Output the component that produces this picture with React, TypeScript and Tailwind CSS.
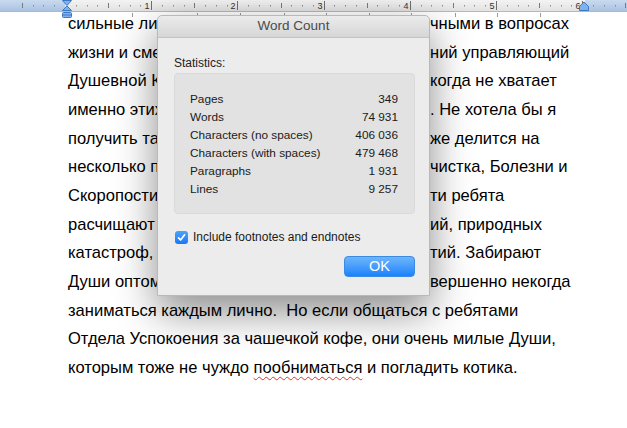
import React from "react";

const X0 = 65;
const INCH = 86.2;

function Ruler() {
  const ticks: React.ReactNode[] = [];
  for (let i = -4; i <= 56; i++) {
    const x = Math.round(X0 + (i * INCH) / 8) + 0.5;
    if (x < 0 || x > 627) continue;
    if (i % 8 === 0 && i > 0) {
      ticks.push(<line key={i} x1={x} x2={x} y1={1} y2={10} stroke="#6f6f6f" strokeWidth={1} />);
      ticks.push(
        <text key={"t" + i} x={x - 2} y={8.5} textAnchor="end" fontSize={9} fill="#333" fontFamily="'Liberation Sans', Arial, sans-serif">
          {i / 8}
        </text>
      );
    } else if (i % 4 === 0 && i !== 0) {
      ticks.push(<line key={i} x1={x} x2={x} y1={3} y2={8} stroke="#7a7a7a" strokeWidth={1} />);
    } else if (i !== 0) {
      ticks.push(<line key={i} x1={x} x2={x} y1={5} y2={6.5} stroke="#8a8a8a" strokeWidth={1} />);
    }
  }
  return (
    <svg width={627} height={12} className="block">
      <defs>
        <linearGradient id="rg" x1="0" y1="0" x2="0" y2="1">
          <stop offset="0" stopColor="#f3f3f3" />
          <stop offset="1" stopColor="#e2e2e2" />
        </linearGradient>
        <linearGradient id="bg" x1="0" y1="0" x2="0" y2="1">
          <stop offset="0" stopColor="#c9daee" />
          <stop offset="1" stopColor="#aac3e2" />
        </linearGradient>
      </defs>
      <rect x={0} y={0} width={627} height={11} fill="url(#rg)" />
      <rect x={0} y={0} width={X0} height={11} fill="url(#bg)" />
      <rect x={585} y={0} width={42} height={11} fill="url(#bg)" />
      {ticks}
      <line x1={0} x2={627} y1={11.5} y2={11.5} stroke="#b8b8b8" strokeWidth={1} />
    </svg>
  );
}

function Markers() {
  return (
    <>
      <svg width={12} height={19} className="absolute left-[61px] top-0" viewBox="0 0 12 19">
        <path d="M1.5 0.5 H10.5 L6 5.5 Z" fill="#7fb2ec" stroke="#3d78c4" strokeWidth={1} />
        <path d="M6 6 L10.5 10.5 H1.5 Z" fill="#7fb2ec" stroke="#3d78c4" strokeWidth={1} />
        <rect x={1.5} y={12.5} width={9} height={5} rx={1} fill="#7fb2ec" stroke="#3d78c4" strokeWidth={1} />
        <line x1={2} x2={10} y1={15} y2={15} stroke="#3d78c4" strokeWidth={1} />
      </svg>
      <svg width={12} height={12} className="absolute left-[578px] top-0" viewBox="0 0 12 12">
        <path d="M6 2 L10.5 6.5 V10.5 H1.5 V6.5 Z" fill="#7fb2ec" stroke="#3d78c4" strokeWidth={1} />
      </svg>
    </>
  );
}

const lines: [string, string][] = [
  ["сильные ли", "чными в вопросах"],
  ["жизни и сме", "ний управляющий"],
  ["Душевной К", "когда не хватает"],
  ["именно этих", ". Не хотела бы я"],
  ["получить та", "же делится на"],
  ["несколько п", "чистка, Болезни и"],
  ["Скоропости", "ти ребята"],
  ["расчищают", "ий, природных"],
  ["катастроф,", "тий. Забирают"],
  ["Души оптом", "вершенно некогда"],
];

const stats: [string, string][] = [
  ["Pages", "349"],
  ["Words", "74 931"],
  ["Characters (no spaces)", "406 036"],
  ["Characters (with spaces)", "479 468"],
  ["Paragraphs", "1 931"],
  ["Lines", "9 257"],
];

function Dialog() {
  return (
    <div className="absolute left-[157px] top-[15px] w-[273px] rounded-t-[5px] border border-[#b9b9b9] bg-[#ececec] shadow-[0_16px_42px_rgba(0,0,0,0.45)] font-['Liberation_Sans',Arial,sans-serif]">
      <div className="h-[22px] rounded-t-[5px] bg-gradient-to-b from-[#ebebeb] to-[#d6d6d6] border-b border-[#c4c4c4] flex items-center justify-center text-[13.5px] text-[#4a4a4a]">
        Word Count
      </div>
      <div className="pt-[19px] pl-[16px] pr-[14px] pb-[18px]">
        <div className="text-[12px] leading-[13px] text-[#222]">Statistics:</div>
        <div className="mt-[3px] rounded-[4px] bg-[#e2e2e2] border border-[#dadada] pt-[17px] pb-[14px] pl-[15px] pr-[16px]">
          {stats.map(([k, v]) => (
            <div key={k} className="flex justify-between h-[18px] items-center text-[11.8px] text-[#1a1a1a]">
              <span>{k}</span>
              <span>{v}</span>
            </div>
          ))}
        </div>
        <div className="mt-[14px] flex items-center gap-[5px] pl-[1px]">
          <div className="w-[13px] h-[13px] rounded-[3px] bg-gradient-to-b from-[#4aa3fb] to-[#1479f5] flex items-center justify-center">
            <svg width="9" height="9" viewBox="0 0 9 9">
              <path d="M1.5 4.8 L3.6 7 L7.6 1.8" fill="none" stroke="#fff" strokeWidth={1.7} strokeLinecap="round" strokeLinejoin="round" />
            </svg>
          </div>
          <span className="text-[12px] text-[#1a1a1a]">Include footnotes and endnotes</span>
        </div>
        <div className="mt-[10px] flex justify-end">
          <div className="w-[71px] h-[21px] rounded-[4px] bg-gradient-to-b from-[#6db5fb] to-[#1682fb] border border-[#3a8ae6] flex items-center justify-center text-[14.5px] text-white">
            OK
          </div>
        </div>
      </div>
    </div>
  );
}

export default function App() {
  const tickXs = [132, 197, 240, 284, 326, 369, 411, 455, 497, 540];
  return (
    <div className="relative w-[627px] h-[428px] bg-white overflow-hidden font-['Liberation_Sans',Arial,sans-serif]">
      <Ruler />
      <Markers />
      {tickXs.map((x) => (
        <div key={x} className="absolute top-[13px] w-px h-[4px] bg-[#9a9a9a]" style={{ left: x }} />
      ))}
      <div className="-mt-[2px] pl-[68px] text-[16.55px] leading-[28.67px] text-black">
        {lines.map(([l, r], i) => (
          <div key={i} className="flex whitespace-nowrap">
            <span className="w-[362px] shrink-0">{l}</span>
            <span>{r}</span>
          </div>
        ))}
        <div className="whitespace-nowrap">заниматься каждым лично.&nbsp; Но если общаться с ребятами</div>
        <div className="whitespace-nowrap">Отдела Успокоения за чашечкой кофе, они очень милые Души,</div>
        <div className="whitespace-nowrap">
          которым тоже не чуждо{" "}
          <span className="underline decoration-wavy decoration-[#e0332b] decoration-1 underline-offset-[3px]">пообниматься</span> и
          погладить котика.
        </div>
      </div>
      <Dialog />
    </div>
  );
}
